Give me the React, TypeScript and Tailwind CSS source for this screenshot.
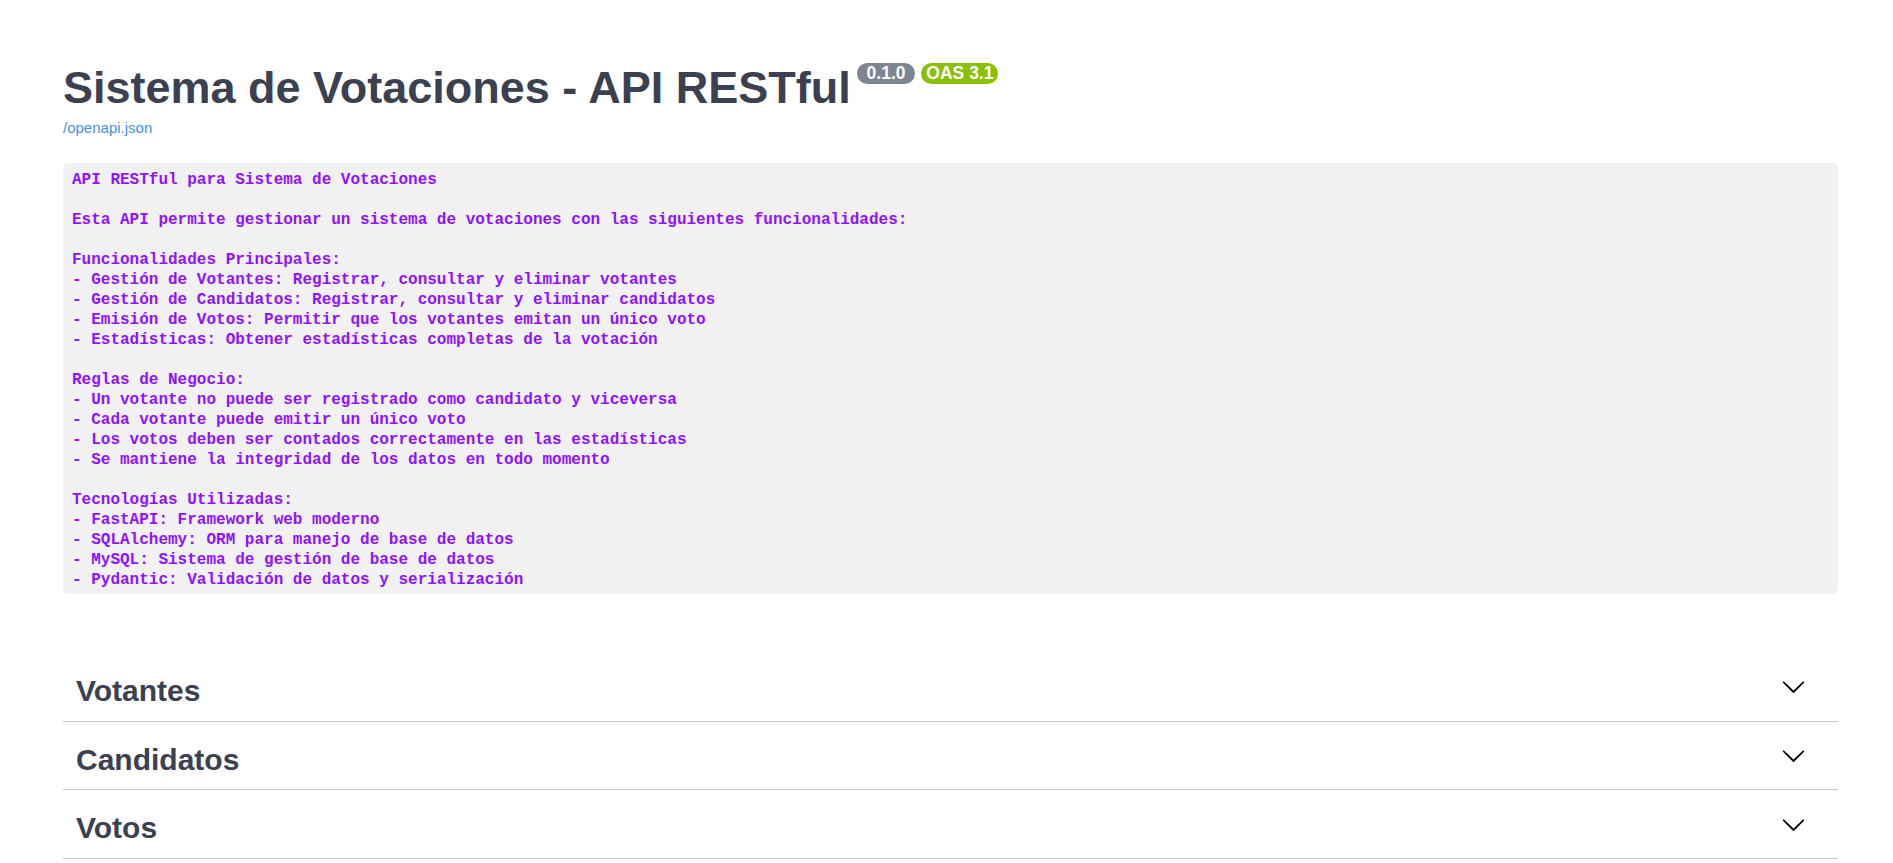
import React from 'react';

const description = `API RESTful para Sistema de Votaciones

Esta API permite gestionar un sistema de votaciones con las siguientes funcionalidades:

Funcionalidades Principales:
- Gestión de Votantes: Registrar, consultar y eliminar votantes
- Gestión de Candidatos: Registrar, consultar y eliminar candidatos
- Emisión de Votos: Permitir que los votantes emitan un único voto
- Estadísticas: Obtener estadísticas completas de la votación

Reglas de Negocio:
- Un votante no puede ser registrado como candidato y viceversa
- Cada votante puede emitir un único voto
- Los votos deben ser contados correctamente en las estadísticas
- Se mantiene la integridad de los datos en todo momento

Tecnologías Utilizadas:
- FastAPI: Framework web moderno
- SQLAlchemy: ORM para manejo de base de datos
- MySQL: Sistema de gestión de base de datos
- Pydantic: Validación de datos y serialización`;

const tags = ['Votantes', 'Candidatos', 'Votos'];

function Chevron() {
  return (
    <svg width="25" height="25" viewBox="0 0 20 20" aria-hidden="true" className="shrink-0">
      <path
        fill="#000"
        d="M17.418 6.109c.272-.268.709-.268.979 0s.271.701 0 .969l-7.908 7.83c-.27.268-.707.268-.979 0l-7.908-7.83c-.27-.268-.27-.701 0-.969.271-.268.709-.268.979 0L10 13.25l7.418-7.141z"
      />
    </svg>
  );
}

function Badge({ children, className = '' }: { children: React.ReactNode; className?: string }) {
  return (
    <span
      className={`flex h-[21px] items-center whitespace-pre rounded-full px-[5px] text-[17.5px] font-bold leading-none text-white ${className}`}
    >
      {children}
    </span>
  );
}

function TagRow({ name }: { name: string }) {
  return (
    <div className="flex h-[68.7px] items-center justify-between border-b border-[#c4c6cb] pl-[13px]">
      <h3 className="mt-[8px] text-[30px] font-bold leading-[30px] text-[#3b4151]">{name}</h3>
      <button type="button" className="mr-[32px] flex items-center" aria-label={`Expand ${name}`}>
        <Chevron />
      </button>
    </div>
  );
}

export default function App() {
  return (
    <div className="min-h-screen bg-white font-['Liberation_Sans',Arial,sans-serif]">
      <div className="ml-[63px] w-[1775px] pt-[63px]">
        <div className="flex items-start">
          <h2 className="mt-[2px] text-[45px] font-bold leading-[45px] text-[#3b4151]">
            Sistema de Votaciones - API RESTful
          </h2>
          <div className="ml-[6px] flex gap-[6px]">
            <Badge className="bg-[#7d8492]">{' 0.1.0 '}</Badge>
            <Badge className="bg-[#89bf04]">OAS 3.1</Badge>
          </div>
        </div>
        <a href="#" className="mt-[9px] block w-fit text-[15px] leading-[18px] text-[#4990e2]">
          /openapi.json
        </a>

        <div className="mt-[26px] rounded-[5px] bg-[#f1f1f1] pb-[4px] pl-[9px] pt-[7px]">
          <pre className="whitespace-pre font-['Liberation_Mono','DejaVu_Sans_Mono',monospace] text-[16px] font-bold leading-[20px] text-[#9012fe]">
            {description}
          </pre>
        </div>

        <div className="mt-[59px]">
          {tags.map((t) => (
            <TagRow key={t} name={t} />
          ))}
        </div>
      </div>
    </div>
  );
}
